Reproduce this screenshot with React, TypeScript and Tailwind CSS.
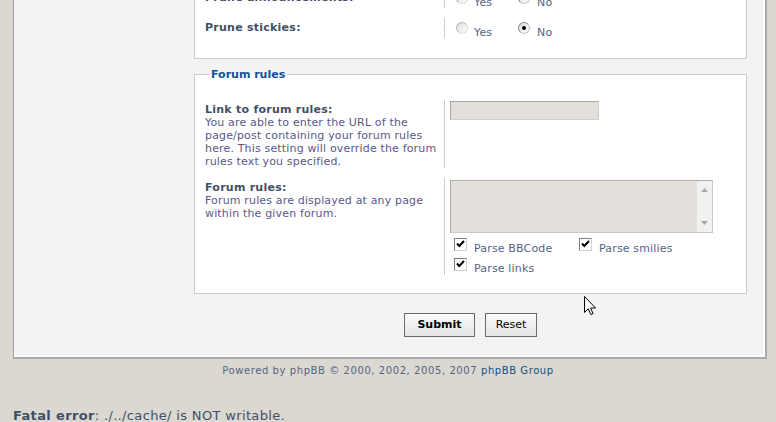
import type { ReactNode } from "react";

function Radio({ checked }: { checked?: boolean }) {
  return (
    <span
      className={
        "relative mt-[4px] inline-block h-[12px] w-[12px] shrink-0 rounded-full border bg-gradient-to-br from-[#dcdcdc] to-white " +
        (checked ? "border-[#8c8c8c] border-r-[#c4c4c4] border-b-[#c4c4c4]" : "border-[#b4b4b4] border-r-[#dedede] border-b-[#dedede]")
      }
    >
      {checked && <span className="absolute left-[3px] top-[3px] h-[4px] w-[4px] rounded-full bg-black" />}
    </span>
  );
}

function RadioPair() {
  return (
    <div className="flex h-[20px] items-start text-[#536482]">
      <label className="flex w-[68px] items-start pl-[6px]">
        <Radio />
        <span className="ml-[6px] mt-[7px]">Yes</span>
      </label>
      <label className="flex items-start">
        <Radio checked />
        <span className="ml-[7px] mt-[7px]">No</span>
      </label>
    </div>
  );
}

function Check() {
  return (
    <span className="inline-flex h-[13px] w-[13px] shrink-0 items-center justify-center border border-[#7f7f7f] border-r-[#cfcfcf] border-b-[#cfcfcf] bg-white">
      <svg width="9" height="9" viewBox="0 0 9 9">
        <path d="M1 3.5 L3.3 6 L8 1" stroke="#000" strokeWidth="2" fill="none" />
      </svg>
    </span>
  );
}

function CheckLabel({ text, className = "" }: { text: string; className?: string }) {
  return (
    <label className={"flex items-start " + className}>
      <Check />
      <span className="ml-[7px] mt-[4px]">{text}</span>
    </label>
  );
}

function Row({ label, explain, children, className = "" }: { label: string; explain?: ReactNode; children: ReactNode; className?: string }) {
  return (
    <dl className={"flex " + className}>
      <dt className="w-[239px] pt-[3px] leading-[13px]">
        <label className="font-bold tracking-[0.25px] text-[#425067]">{label}</label>
        {explain && <span className="block whitespace-nowrap tracking-[0.16px] text-[#58598a]">{explain}</span>}
      </dt>
      <dd className="flex-1 border-l border-[#cccccc] pl-[5px] tracking-[0.16px]">{children}</dd>
    </dl>
  );
}

export default function App() {
  return (
    <div className="relative h-[422px] w-[776px] overflow-hidden bg-[#dbd8d1] font-['DejaVu_Sans',Verdana,sans-serif] text-[11px]">
      {/* main panel */}
      <div className="-mt-[40px] ml-[13px] w-[754px] border-l border-r-2 border-b-2 border-l-[#9a9a9a] border-r-[#a9a9a9] border-b-[#a9a9a9] bg-white">
        <div className="mr-[2px] mb-[2px] rounded-b-[4px] bg-[#f3f3f3] pb-[18px]">
          <fieldset className="ml-[180px] mr-[16px] border border-[#cccccc] bg-white px-[10px] pt-[27px] pb-[20px]">
            <Row label="Prune announcements:" className="mb-[10px] h-[20px]">
              <RadioPair />
            </Row>
            <Row label="Prune stickies:" className="h-[20px]">
              <RadioPair />
            </Row>
          </fieldset>

          <fieldset className="mt-[9px] ml-[180px] mr-[16px] border border-[#cccccc] bg-white px-[10px] pt-[19px] pb-[18px]">
            <legend className="ml-[4px] px-[2px] text-[11px] font-bold leading-[13px] text-[#115098]">Forum rules</legend>
            <Row
              label="Link to forum rules:"
              className="mb-[10px]"
              explain={
                <>
                  You are able to enter the URL of the
                  <br />
                  page/post containing your forum rules
                  <br />
                  here. This setting will override the forum
                  <br />
                  rules text you specified.
                </>
              }
            >
              <input
                readOnly
                className="mt-[1px] block h-[19px] w-[149px] border border-[#aaa69e] border-r-[#d2cec6] border-b-[#d2cec6] bg-[#e3e0db] outline-none"
              />
            </Row>
            <Row
              label="Forum rules:"
              explain={
                <>
                  Forum rules are displayed at any page
                  <br />
                  within the given forum.
                </>
              }
            >
              <div className="mt-[2px] flex h-[53px] w-[263px] border border-[#b3afa7] border-r-[#cfcbc3] border-b-[#cfcbc3] bg-[#e3e0db]">
                <div className="flex-1" />
                <div className="flex w-[16px] flex-col items-center justify-between border-l border-[#e6e4e0] bg-[#f2f1ef] py-[7px]">
                  <svg width="7" height="4" viewBox="0 0 7 4"><path d="M0 4 L3.5 0 L7 4 Z" fill="#a8a8a8" /></svg>
                  <svg width="7" height="4" viewBox="0 0 7 4"><path d="M0 0 L3.5 4 L7 0 Z" fill="#a8a8a8" /></svg>
                </div>
              </div>
              <div className="mt-[5px] pl-[4px] leading-[13px] text-[#536482]">
                <div className="flex h-[20px]">
                  <CheckLabel text="Parse BBCode" className="w-[125px]" />
                  <CheckLabel text="Parse smilies" />
                </div>
                <CheckLabel text="Parse links" />
              </div>
            </Row>
          </fieldset>

          <div className="mt-[19px] ml-[180px] mr-[16px] flex justify-center gap-[10px]">
            <button className="h-[24px] w-[71px] border border-[#6a6a6a] bg-gradient-to-b from-[#fbfbfb] to-[#e4e4e4] text-[11px] font-bold text-black">
              Submit
            </button>
            <button className="h-[24px] w-[52px] border border-[#6a6a6a] bg-gradient-to-b from-[#fbfbfb] to-[#e4e4e4] text-[11px] text-black">
              Reset
            </button>
          </div>
        </div>
      </div>

      <p className="mt-[6px] text-center text-[10px] leading-[12px] tracking-[0.58px] text-[#536482]">
        Powered by phpBB © 2000, 2002, 2005, 2007 <span className="text-[#105289]">phpBB Group</span>
      </p>

      <p className="mt-[31px] pl-[13px] text-[13px] leading-[15px] tracking-[0.35px] text-[#425067]">
        <b>Fatal error</b>: ./../cache/ is NOT writable.
      </p>

      {/* mouse pointer */}
      <svg className="absolute left-[584px] top-[296px]" width="13" height="20" viewBox="0 0 13 20">
        <path d="M0.5 0.5 L0.5 16.5 L4.3 12.8 L6.8 18.5 L9 17.6 L6.6 12 L11.5 12 Z" fill="#fff" stroke="#000" strokeWidth="1" />
      </svg>
    </div>
  );
}
